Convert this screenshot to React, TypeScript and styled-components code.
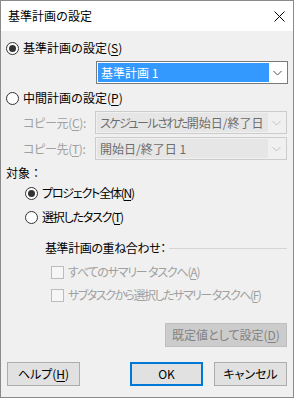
import React from "react";
import styled, { createGlobalStyle } from "styled-components";

const Global = createGlobalStyle`
  html, body { margin: 0; padding: 0; background: #f0f0f0; }
  * { box-sizing: border-box; }
  body { font-family: "Noto Sans CJK JP", "Noto Sans", sans-serif; font-size: 12px; }
`;

const Window = styled.div`
  width: 294px;
  height: 398px;
  border: 1px solid #8a8a8a;
  display: flex;
  flex-direction: column;
  background: #f0f0f0;
  overflow: hidden;
`;

const TitleBar = styled.div`
  height: 30px;
  background: #fff;
  display: flex;
  align-items: center;
  justify-content: space-between;
  padding: 0 8px 0 7px;
  flex: none;
`;

const Title = styled.span`
  font-size: 12px;
  line-height: 16px;
  color: #000;
  margin-top: -1px;
`;

const Body = styled.div`
  flex: 1;
  display: flex;
  flex-direction: column;
  padding: 9px 6px 0 5px;
`;

const Row = styled.div<{ $indent?: number; $mt?: number }>`
  display: flex;
  align-items: center;
  height: 16px;
  padding-left: ${(p) => p.$indent ?? 0}px;
  margin-top: ${(p) => p.$mt ?? 0}px;
`;

const Label = styled.span<{ $disabled?: boolean; $spacing?: number }>`
  font-size: 12px;
  line-height: 16px;
  color: ${(p) => (p.$disabled ? "#a0a0a0" : "#000")};
  white-space: pre;
  font-feature-settings: ${(p) => (p.$spacing !== undefined ? '"palt"' : "normal")};
  letter-spacing: ${(p) => p.$spacing ?? 0}px;
  u { text-decoration: underline; text-underline-offset: 2px; }
`;

const Kana = styled.span`
  font-feature-settings: "palt";
  letter-spacing: -1.5px;
`;

const RadioCircle = styled.span<{ $checked?: boolean }>`
  width: 13px;
  height: 13px;
  border-radius: 50%;
  border: 1px solid #333;
  background: #fff;
  display: inline-flex;
  align-items: center;
  justify-content: center;
  margin-right: 4px;
  flex: none;
  &::after {
    content: "";
    width: 7px;
    height: 7px;
    border-radius: 50%;
    background: ${(p) => (p.$checked ? "#333" : "transparent")};
  }
`;

const CheckBox = styled.span`
  width: 13px;
  height: 13px;
  border: 1px solid #bcbcbc;
  background: #f6f6f6;
  margin-right: 4px;
  flex: none;
`;

const Combo = styled.div<{ $disabled?: boolean; $ml?: number; $mt?: number }>`
  width: 192px;
  height: 23px;
  margin-left: ${(p) => p.$ml ?? 0}px;
  margin-top: ${(p) => p.$mt ?? 0}px;
  border: 1px solid ${(p) => (p.$disabled ? "#cccccc" : "#7a7a7a")};
  background: ${(p) => (p.$disabled ? "#f0f0f0" : "#fff")};
  display: flex;
  align-items: stretch;
  padding: 1px;
  flex: none;
`;

const ComboField = styled.div<{ $selected?: boolean; $disabled?: boolean }>`
  flex: 1;
  display: flex;
  align-items: center;
  padding-left: 3px;
  background: ${(p) => (p.$selected ? "#3399ff" : p.$disabled ? "#e6e6e6" : "#fff")};
  color: ${(p) => (p.$selected ? "#fff" : p.$disabled ? "#6d6d6d" : "#000")};
  font-size: 12px;
  line-height: 16px;
  white-space: pre;
  overflow: hidden;
`;

const ComboArrow = styled.div`
  width: 17px;
  display: flex;
  align-items: center;
  justify-content: center;
  flex: none;
`;

const FieldRow = styled.div<{ $mt?: number }>`
  display: flex;
  align-items: center;
  margin-top: ${(p) => p.$mt ?? 0}px;
`;

const FieldLabel = styled(Label)`
  width: 90px;
  padding-left: 17px;
`;

const GroupHeader = styled.div`
  display: flex;
  align-items: center;
  height: 16px;
  margin-top: 15px;
  padding-left: 39px;
  gap: 3px;
`;

const Rule = styled.div`
  flex: 1;
  height: 1px;
  background: #d5d5d5;
`;

const Button = styled.button<{ $primary?: boolean; $disabled?: boolean; $w?: number }>`
  width: ${(p) => p.$w ?? 73}px;
  height: 24px;
  font-family: "Noto Sans CJK JP", "Noto Sans", sans-serif;
  font-size: 12px;
  line-height: 16px;
  padding: 0;
  background: ${(p) => (p.$disabled ? "#cccccc" : "#e1e1e1")};
  border: ${(p) => (p.$primary ? "2px solid #0078d7" : p.$disabled ? "1px solid #bfbfbf" : "1px solid #adadad")};
  color: ${(p) => (p.$disabled ? "#838383" : "#000")};
  display: flex;
  align-items: center;
  justify-content: center;
  font-feature-settings: "palt";
  u { text-decoration: underline; text-underline-offset: 2px; }
`;

const DefaultRow = styled.div`
  display: flex;
  justify-content: flex-end;
  margin-top: 20px;
`;

const ButtonRow = styled.div`
  display: flex;
  align-items: center;
  gap: 11px;
  margin-top: 15px;
  padding-left: 1px;
`;

const Spacer = styled.div`
  flex: 1;
`;

const Chevron = ({ color }: { color: string }) => (
  <svg width="9" height="6" viewBox="0 0 9 6">
    <path d="M0.5 1 L4.5 5 L8.5 1" fill="none" stroke={color} strokeWidth="1" />
  </svg>
);

const CloseIcon = () => (
  <svg width="11" height="11" viewBox="0 0 11 11">
    <path d="M0.5 0.5 L10.5 10.5 M10.5 0.5 L0.5 10.5" stroke="#000" strokeWidth="1" />
  </svg>
);

export default function App() {
  return (
    <>
      <Global />
      <Window>
        <TitleBar>
          <Title>基準計画の設定</Title>
          <CloseIcon />
        </TitleBar>
        <Body>
          <Row>
            <RadioCircle $checked />
            <Label>
              基準計画の設定(<u>S</u>)
            </Label>
          </Row>
          <Combo $ml={90} $mt={5}>
            <ComboField $selected>基準計画 1</ComboField>
            <ComboArrow>
              <Chevron color="#555" />
            </ComboArrow>
          </Combo>
          <Row $mt={6}>
            <RadioCircle />
            <Label>
              中間計画の設定(<u>P</u>)
            </Label>
          </Row>
          <FieldRow $mt={5}>
            <FieldLabel $disabled $spacing={-0.3}>
              コピー元(<u>C</u>):
            </FieldLabel>
            <Combo $disabled>
              <ComboField $disabled>
                <Kana>スケジュールされた</Kana>開始日/終了日
              </ComboField>
              <ComboArrow>
                <Chevron color="#c0c0c0" />
              </ComboArrow>
            </Combo>
          </FieldRow>
          <FieldRow $mt={3}>
            <FieldLabel $disabled $spacing={-0.3}>
              コピー先(<u>T</u>):
            </FieldLabel>
            <Combo $disabled>
              <ComboField $disabled>開始日/終了日 1</ComboField>
              <ComboArrow>
                <Chevron color="#c0c0c0" />
              </ComboArrow>
            </Combo>
          </FieldRow>
          <Row $mt={5}>
            <Label>対象：</Label>
          </Row>
          <Row $mt={4} $indent={19}>
            <RadioCircle $checked />
            <Label $spacing={-1.2}>
              プロジェクト全体(<u>N</u>)
            </Label>
          </Row>
          <Row $mt={8} $indent={19}>
            <RadioCircle />
            <Label $spacing={-1.2}>
              選択したタスク(<u>T</u>)
            </Label>
          </Row>
          <GroupHeader>
            <Label $spacing={-0.4}>基準計画の重ね合わせ：</Label>
            <Rule />
          </GroupHeader>
          <Row $mt={8} $indent={45}>
            <CheckBox />
            <Label $disabled $spacing={-1.2}>
              {"すべてのサマリー タスクへ("}<u>A</u>)
            </Label>
          </Row>
          <Row $mt={7} $indent={45}>
            <CheckBox />
            <Label $disabled $spacing={-1.5}>
              {"サブタスクから選択したサマリー タスクへ("}<u>F</u>)
            </Label>
          </Row>
          <DefaultRow>
            <Button $disabled $w={122}>
              既定値として設定(<u>D</u>)
            </Button>
          </DefaultRow>
          <ButtonRow>
            <Button>
              ヘルプ(<u>H</u>)
            </Button>
            <Spacer />
            <Button $primary>OK</Button>
            <Button>キャンセル</Button>
          </ButtonRow>
        </Body>
      </Window>
    </>
  );
}
